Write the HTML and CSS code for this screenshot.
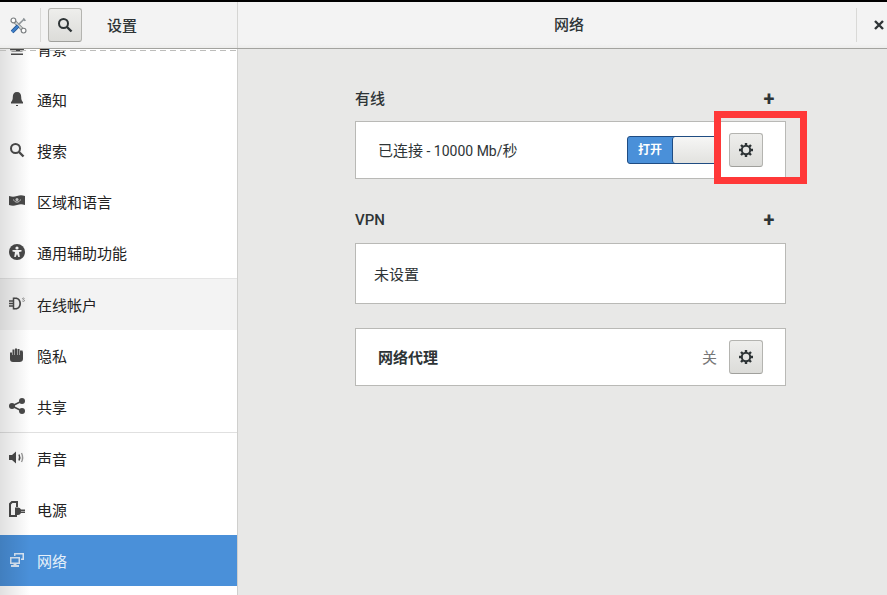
FILE: index.html
```html
<!DOCTYPE html>
<html lang="zh-CN">
<head>
  <meta charset="UTF-8">
  <title>设置 - 网络</title>
  <link rel="stylesheet" href="styles.css">
</head>
<body>

<header class="topbar">
  <div class="topbar-left">
    <div class="app-icon">
      <svg width="17" height="17" viewBox="0 0 20 20">
        <path d="M5 5l10 10" stroke="#8b8f90" stroke-width="4"/>
        <path d="M5 5l10 10" stroke="#d4d6d5" stroke-width="2"/>
        <circle cx="4" cy="4" r="2.800" fill="#fff" stroke="#7d8183" stroke-width="1.400"/>
        <circle cx="16" cy="16" r="2.800" fill="#fff" stroke="#7d8183" stroke-width="1.400"/>
        <path d="M10 9l7-7" stroke="#8d9498" stroke-width="1.800"/>
        <path d="M16 1l3 3-2 1-2-2z" fill="#8d9498"/>
        <path d="M2.500 17.500l7-7" stroke="#24548f" stroke-width="4.400"/>
        <path d="M2.500 17.500l7-7" stroke="#3f80cb" stroke-width="2.600"/>
      </svg>
    </div>
    <button class="btn">
      <svg width="16" height="16" viewBox="0 0 16 16"><circle cx="6.500" cy="6.500" r="4.500" fill="none" stroke="#2e3436" stroke-width="2"/><path d="M10 10l4.500 4.500" stroke="#2e3436" stroke-width="2.400"/></svg>
    </button>
    <div class="app-title">设置</div>
  </div>
  <div class="topbar-title">网络</div>
  <div class="topbar-close">
    <svg width="10" height="10" viewBox="0 0 10 10"><path d="M1 1l8 8M9 1l-8 8" stroke="#2e3436" stroke-width="2.400"/></svg>
  </div>
</header>

<div class="main">
  <aside class="sidebar">
    <div class="scroll-edge"></div>
    <div class="rows">
      <div class="row">
        <span class="icon"><svg width="16" height="16" viewBox="0 0 16 16"><path d="M1 8h14v1a2.500 2.500 0 0 1-2.500 2.500h-9A2.500 2.500 0 0 1 1 9zM2 13.500h12V15H2z" fill="#4a4a4a"/></svg></span>
        <span>背景</span>
      </div>
      <div class="row">
        <span class="icon"><svg width="16" height="16" viewBox="0 0 16 16"><path d="M8 1c3 0 4.200 2 4.200 5 0 2.500.5 4 1.800 5v1.500H2V11c1.300-1 1.800-2.500 1.800-5 0-3 1.200-5 4.200-5zM7 14h2v1H7z" fill="#4a4a4a"/></svg></span>
        <span>通知</span>
      </div>
      <div class="row">
        <span class="icon"><svg width="16" height="16" viewBox="0 0 16 16"><circle cx="6.500" cy="6.500" r="4.500" fill="none" stroke="#4a4a4a" stroke-width="2"/><path d="M10 10l4.500 4.500" stroke="#4a4a4a" stroke-width="2.400"/></svg></span>
        <span>搜索</span>
      </div>
      <div class="row">
        <span class="icon"><svg width="16" height="16" viewBox="0 0 16 16"><path d="M0 3c3 1 5 1 8 0s5-1 8 0v9c-3-1-5-1-8 0s-5 1-8 0z" fill="#4a4a4a"/><path d="M4.500 6.500c1 3.500 6 3.500 7 0" fill="none" stroke="#ccc"/><circle cx="8" cy="6.500" r="1.500" fill="#ccc"/></svg></span>
        <span>区域和语言</span>
      </div>
      <div class="row">
        <span class="icon"><svg width="16" height="16" viewBox="0 0 16 16"><circle cx="8" cy="8" r="8" fill="#4a4a4a"/><circle cx="8" cy="4" r="1.600" fill="#fff"/><path d="M3.500 6h9v1.500L10 8l.8 5H9.300L8 10l-1.300 3H5.200L6 8l-2.500-.5z" fill="#fff"/></svg></span>
        <span>通用辅助功能</span>
      </div>
      <div class="row hover">
        <span class="icon"><svg width="16" height="16" viewBox="0 0 16 16"><path d="M5 1.500h1.500c3.500 0 5.500 2.700 5.500 6s-2 6-5.500 6H5V12h1.500c2.500 0 3.800-2 3.800-4.500S9 3 6.500 3H5z" fill="#4a4a4a"/><path d="M4.500 1.500v12M0 5h5M0 7.500h5M0 10h5" stroke="#4a4a4a" stroke-width="1.500"/><path d="M15.500 2.500c-1-.8-2-.5-2 .3s2 .7 2 1.700-1.200 1.100-2.200.5" fill="none" stroke="#777" stroke-width=".8"/></svg></span>
        <span>在线帐户</span>
      </div>
      <div class="row">
        <span class="icon"><svg width="16" height="16" viewBox="0 0 16 16"><path d="M1 5.500h2V8h.5V2.500h2V8H6V1.500h2V8h.5V2h2v6h.5V3.500h2.500l.5 2V12c0 2-1.500 3-3.500 3H4c-2 0-3-1-3-3z" fill="#4a4a4a"/></svg></span>
        <span>隐私</span>
      </div>
      <div class="row">
        <span class="icon"><svg width="16" height="16" viewBox="0 0 16 16"><path d="M3 8l10-5M3 8l10 5" stroke="#4a4a4a" stroke-width="1.600"/><circle cx="3" cy="8" r="3" fill="#4a4a4a"/><circle cx="13" cy="3" r="3" fill="#4a4a4a"/><circle cx="13" cy="13" r="3" fill="#4a4a4a"/></svg></span>
        <span>共享</span>
      </div>
      <div class="row row-sep">
        <span class="icon"><svg width="16" height="16" viewBox="0 0 16 16"><path d="M0 5h3l4-3.500v12L3 10H0z" fill="#4a4a4a"/><path d="M10 4.500c1 2 1 4 0 6" fill="none" stroke="#4a4a4a" stroke-width="1.500"/><path d="M12.500 3c1.500 3 1.500 6 0 9" fill="none" stroke="#999" stroke-width="1.400"/></svg></span>
        <span>声音</span>
      </div>
      <div class="row">
        <span class="icon"><svg width="16" height="16" viewBox="0 0 16 16"><path d="M1 15V3l2-2h5v5" fill="none" stroke="#4a4a4a" stroke-width="2"/><path d="M0 15h8" stroke="#4a4a4a" stroke-width="2"/><path d="M6 6.500h3a3.500 3.500 0 0 1 3 2h4V10h-4v.5h4V12h-4a3.500 3.500 0 0 1-3 2H6z" fill="#4a4a4a"/></svg></span>
        <span>电源</span>
      </div>
      <div class="row active">
        <span class="icon"><svg width="16" height="16" viewBox="0 0 16 16"><path d="M1 5h10v7H7.500v1H10v2H2v-2h2.500v-1H1zM2.500 6.500v4h7v-4z" fill="#dbe8f6"/><path d="M5 1h10v7h-3V6.500h1.500v-4h-7V4H5z" fill="#dbe8f6"/></svg></span>
        <span>网络</span>
      </div>
    </div>
  </aside>

  <section class="panel">
    <div class="panel-head head-wired">
      <h3>有线</h3>
      <span class="plus">+</span>
    </div>
    <div class="card card-wired">
      <span class="card-label">已连接<span class="latin"> - 10000 Mb/</span>秒</span>
      <div class="switch">
        <span class="switch-on">打开</span>
        <span class="switch-knob"></span>
      </div>
      <button class="btn">
        <svg width="16" height="16" viewBox="0 0 16 16"><g stroke="#2e3436" stroke-width="2.400"><path d="M8 1v14M1 8h14M3 3l10 10M13 3L3 13"/></g><circle cx="8" cy="8" r="4.200" fill="#e4e4e2" stroke="#2e3436" stroke-width="2"/></svg>
      </button>
    </div>

    <div class="panel-head head-vpn">
      <h3>VPN</h3>
      <span class="plus">+</span>
    </div>
    <div class="card card-vpn">
      <span>未设置</span>
    </div>

    <div class="card card-proxy">
      <strong>网络代理</strong>
      <span class="status">关</span>
      <button class="btn">
        <svg width="16" height="16" viewBox="0 0 16 16"><g stroke="#2e3436" stroke-width="2.400"><path d="M8 1v14M1 8h14M3 3l10 10M13 3L3 13"/></g><circle cx="8" cy="8" r="4.200" fill="#e4e4e2" stroke="#2e3436" stroke-width="2"/></svg>
      </button>
    </div>
  </section>
</div>

<div class="callout"></div>

</body>
</html>
```

FILE: styles.css
```css
body {
  margin: 0;
  width: 887px;
  height: 595px;
  overflow: hidden;
  display: flex;
  flex-direction: column;
  background: #e8e8e7;
  color: #2e3436;
  font-family: Roboto, "Noto Sans CJK SC", sans-serif;
  font-size: 15px;
  position: relative;
}

.topbar {
  flex: none;
  height: 46px;
  display: flex;
  border-top: 2px solid #000;
  border-bottom: 1px solid #a3a39f;
  background: linear-gradient(#f3f3f3, #f3f3f3 42px, #ececeb);
}

.topbar-left {
  width: 237px;
  display: flex;
  align-items: center;
  border-right: 1px solid #d5d5d3;
}

.app-icon {
  width: 41px;
  height: 34px;
  padding-right: 3px;
  display: flex;
  align-items: center;
  justify-content: center;
  border-right: 1px solid #d9d9d7;
  box-sizing: border-box;
}

.topbar-left .btn {
  margin-left: 7px;
}

.app-title {
  margin-left: 25px;
  padding-bottom: 1px;
  font-weight: 500;
}

.topbar-title {
  flex: 1;
  margin: 6px 0;
  padding-left: 44px;
  text-align: center;
  font-weight: 500;
  line-height: 34px;
  border-right: 1px solid #d9d9d7;
}

.topbar-close {
  width: 30px;
  padding-left: 17px;
  box-sizing: border-box;
  display: flex;
  align-items: center;
}

.btn {
  width: 34px;
  height: 34px;
  padding: 0;
  flex: none;
  display: flex;
  align-items: center;
  justify-content: center;
  border: 1px solid #b4b4b0;
  border-bottom-color: #a0a09c;
  border-radius: 3px;
  background: linear-gradient(#eeeeec, #dcdcd9);
}

.main {
  flex: 1;
  display: flex;
  min-height: 0;
}

.sidebar {
  width: 237px;
  background: #fff;
  border-right: 1px solid #cfcfcd;
  overflow: hidden;
  position: relative;
}

.sidebar::after {
  content: "";
  position: absolute;
  left: 0;
  top: 0;
  bottom: 0;
  width: 30px;
  background: linear-gradient(to right, rgba(0,0,0,0.12), rgba(0,0,0,0));
}

.scroll-edge {
  position: absolute;
  left: 0;
  right: 0;
  top: 1px;
  height: 1px;
  background: repeating-linear-gradient(to right, #bdbdbb 0, #bdbdbb 6px, transparent 6px, transparent 10px);
  z-index: 1;
}

.rows {
  margin-top: -26px;
}

.row {
  height: 51px;
  display: flex;
  align-items: center;
  gap: 12px;
  padding-left: 9px;
  color: #222;
}

.row .icon {
  width: 16px;
  height: 16px;
  display: flex;
  margin-top: -2px;
}

.row.hover {
  background: #f3f3f3;
  border-top: 1px solid #e4e4e4;
}

.row-sep {
  border-top: 1px solid #e0e0e0;
  height: 52px;
  box-sizing: border-box;
}

.row.active {
  background: #4a90d9;
  color: #e6f0fa;
}

.panel {
  flex: 1;
  padding: 39px 0 0 117px;
}

.panel-head {
  width: 431px;
  height: 20px;
  display: flex;
  align-items: center;
  justify-content: space-between;
  margin-bottom: 13px;
}

.panel-head h3 {
  margin: 0;
  font-size: 15px;
  font-weight: 500;
}

.head-wired h3 {
  padding-bottom: 2px;
}

.head-wired .plus {
  padding-top: 2px;
}

.head-vpn {
  margin-top: 31px;
}

.plus {
  width: 34px;
  text-align: center;
  font-size: 20px;
  font-weight: bold;
  line-height: 20px;
}

.card {
  width: 431px;
  box-sizing: border-box;
  display: flex;
  align-items: center;
  background: #fff;
  border: 1px solid #b9b9b6;
}

.card-wired {
  height: 58px;
  padding: 0 22px;
}

.card-label {
  flex: 1;
  padding-bottom: 2px;
}

.latin {
  font-size: 14px;
}

.switch {
  width: 92px;
  height: 28px;
  box-sizing: border-box;
  display: flex;
  margin-right: 10px;
  border: 1px solid #1f4c82;
  border-radius: 3px;
  background: #4a90d9;
}

.switch-on {
  width: 44px;
  flex: none;
  text-align: center;
  color: #fff;
  font-size: 12px;
  font-weight: bold;
  line-height: 26px;
}

.switch-knob {
  flex: 1;
  border-left: 1px solid #1f4c82;
  border-radius: 3px;
  background: linear-gradient(#f6f6f5, #e2e2df);
}

.card-vpn {
  height: 61px;
  padding: 0 18px;
}

.card-proxy {
  height: 58px;
  margin-top: 24px;
  padding: 0 22px;
}

.card-proxy strong {
  flex: 1;
  padding-bottom: 2px;
  font-weight: bold;
}

.status {
  margin-right: 12px;
  padding-bottom: 2px;
  color: #777;
}

.callout {
  position: absolute;
  left: 714px;
  top: 111px;
  width: 93px;
  height: 73px;
  box-sizing: border-box;
  border: 7px solid #ff3838;
}
```
